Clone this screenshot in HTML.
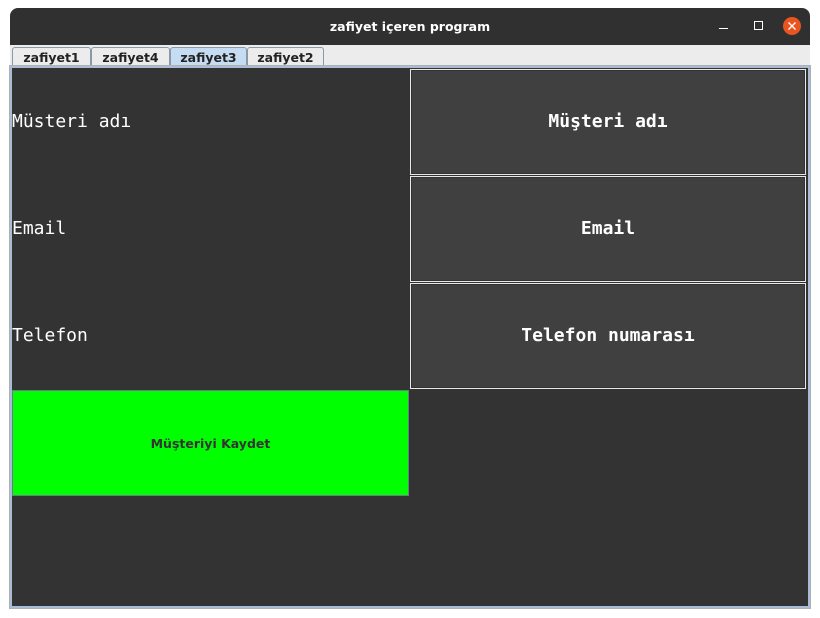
<!DOCTYPE html>
<html><head><meta charset="utf-8"><style>
*{margin:0;padding:0;box-sizing:border-box}
body{width:820px;height:618px;background:#fff;position:relative;overflow:hidden;font-family:"DejaVu Sans",sans-serif}
.abs{position:absolute}
.title{left:10px;top:8px;width:800px;height:37px;background:#303030;border-radius:8px 8px 0 0;color:#fff;font-weight:bold;font-size:12.5px;text-align:center;line-height:38px}
.tabs{left:10px;top:45px;width:800px;height:22px;background:#ececec}
.tab{position:absolute;top:2px;height:20px;border:1px solid #8a98a8;border-bottom:none;background:#ececec;font-weight:bold;font-size:12.5px;color:#222;text-align:center;line-height:19px;border-radius:3px 3px 0 0}
.panel{left:10px;top:66px;width:800px;height:542px;border:2px solid #a8bcd8;background:#333;outline:1px solid #b0b0b0}
.lbl{left:12px;color:#fff;font-family:"DejaVu Sans Mono",monospace;font-size:18px;height:20px;line-height:20px}
.fld{left:410px;width:396px;height:106px;background:#404040;border:1px solid #e8e8e8;box-shadow:inset 0 0 0 1px #333;color:#fff;font-family:"DejaVu Sans Mono",monospace;font-weight:bold;font-size:18px;text-align:center;line-height:104px}
.btn{left:12px;top:390px;width:397px;height:106px;background:#00ff00;border:1px solid #6a7a88;color:#333;font-weight:bold;font-size:12.5px;text-align:center;line-height:106px}
</style></head><body>
<div class="abs title">zafiyet içeren program</div>
<div class="abs" style="left:719px;top:28px;width:9px;height:1px;background:#fff"></div>
<div class="abs" style="left:754px;top:21px;width:9px;height:9px;border:1px solid #fff"></div>
<svg class="abs" style="left:783px;top:17px" width="18" height="18"><circle cx="9" cy="9" r="9" fill="#e95420"/><path d="M5.5 5.5L12.5 12.5M12.5 5.5L5.5 12.5" stroke="#fff" stroke-width="1.3"/></svg>
<div class="abs tabs">
<div class="tab" style="left:2px;width:79px">zafiyet1</div>
<div class="tab" style="left:81px;width:79px">zafiyet4</div>
<div class="tab" style="left:160px;width:77px;background:#c6dcf2">zafiyet3</div>
<div class="tab" style="left:237px;width:77px">zafiyet2</div>
</div>
<div class="abs panel"></div>
<div class="abs lbl" style="top:112px">Müsteri adı</div>
<div class="abs lbl" style="top:219px">Email</div>
<div class="abs lbl" style="top:326px">Telefon</div>
<div class="abs fld" style="top:69px">Müşteri adı</div>
<div class="abs fld" style="top:176px">Email</div>
<div class="abs fld" style="top:283px">Telefon numarası</div>
<div class="abs btn">Müşteriyi Kaydet</div>
</body></html>
